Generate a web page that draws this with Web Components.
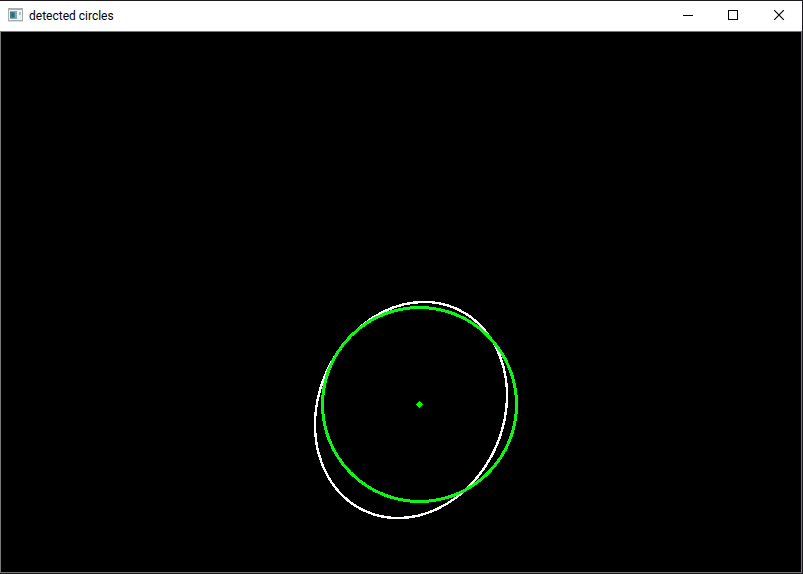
<!DOCTYPE html>
<html lang="en">
<head>
<meta charset="utf-8">
<title>detected circles</title>
<style>
  html, body { height: 100%; margin: 0; background: #1c1a1e; }
  body { font-family: Roboto, "Noto Sans", sans-serif; font-size: 12px; color: #000; }
</style>
</head>
<body>
<app-window>
  <title-bar slot="title">detected circles</title-bar>
  <circle-canvas></circle-canvas>
</app-window>

<script>
class AppWindow extends HTMLElement {
  constructor() {
    super();
    this.attachShadow({ mode: "open" }).innerHTML = `
      <style>
        :host { display: flex; flex-direction: column; box-sizing: border-box; height: 100vh;
                border: solid #1c1a1e; border-width: 1px 1px 1px 0; }
        main { flex: 1; min-height: 0; display: flex; border: 1px solid #787878; background: #000; }
        ::slotted(circle-canvas) { flex: 1; min-width: 0; }
      </style>
      <slot name="title"></slot>
      <main><slot></slot></main>`;
  }
}

class TitleBar extends HTMLElement {
  constructor() {
    super();
    this.attachShadow({ mode: "open" }).innerHTML = `
      <style>
        :host { display: flex; align-items: center; height: 30px; background: #fff; }
        .icon { flex: none; margin: 0 6px 2px 8px; }
        h1 { flex: 1; margin: 0; font: inherit; line-height: 18px; white-space: nowrap; }
        window-button { flex: none; }
      </style>
      <svg class="icon" width="15" height="14" viewBox="0 0 15 14" shape-rendering="crispEdges" aria-hidden="true">
        <rect x="0" y="0" width="15" height="13" fill="#a9adad"/>
        <rect x="1" y="2" width="13" height="10" fill="#eef1f2"/>
        <rect x="2" y="3" width="7" height="8" fill="#7fb0ae"/>
        <rect x="2" y="4" width="5" height="6" fill="#43818b"/>
        <rect x="3" y="5" width="3" height="4" fill="#376c82"/>
        <rect x="11" y="4" width="2" height="3" fill="#b5bfc0"/>
        <rect x="0" y="13" width="15" height="1" fill="#dcdede"/>
      </svg>
      <h1><slot></slot></h1>
      <window-button kind="minimize"></window-button>
      <window-button kind="maximize"></window-button>
      <window-button kind="close"></window-button>`;
  }
}

const GLYPHS = {
  minimize: '<path d="M1 5.5H11" shape-rendering="crispEdges"/>',
  maximize: '<rect x="0.5" y="0.5" width="9" height="9" shape-rendering="crispEdges"/>',
  close: '<path d="M0.2 0.2L9.8 9.8M9.8 0.2L0.2 9.8" stroke-width="1.2"/>'
};

class WindowButton extends HTMLElement {
  connectedCallback() {
    const kind = this.getAttribute("kind");
    this.attachShadow({ mode: "open" }).innerHTML = `
      <style>
        :host { display: block; }
        button { display: flex; align-items: center; justify-content: center;
                 width: 46px; height: 30px; padding: 0 0 2px; border: 0; background: #fff; }
        button:hover { background: #e5e5e5; }
        svg { overflow: visible; }
      </style>
      <button type="button" aria-label="${kind}">
        <svg width="10" height="10" viewBox="0 0 10 10" fill="none" stroke="#000">${GLYPHS[kind]}</svg>
      </button>`;
  }
}

class CircleCanvas extends HTMLElement {
  constructor() {
    super();
    this.attachShadow({ mode: "open" }).innerHTML = `
      <style>
        :host { display: block; background: #000; }
        svg { display: block; width: 100%; height: 100%; }
      </style>
      <svg viewBox="0 0 800 540" fill="none" shape-rendering="crispEdges" role="img" aria-label="White ellipse with a detected green circle">
        <ellipse cx="410" cy="378" rx="111" ry="92.6" transform="rotate(-65.5 410 378)" stroke="#fff" stroke-width="2.4"/>
        <circle cx="418.5" cy="372.5" r="97" stroke="#0cf814" stroke-width="3"/>
        <path d="M418.5 369L422 372.5L418.5 376L415 372.5Z" fill="#00ff00"/>
      </svg>`;
  }
}

customElements.define("window-button", WindowButton);
customElements.define("title-bar", TitleBar);
customElements.define("circle-canvas", CircleCanvas);
customElements.define("app-window", AppWindow);
</script>
</body>
</html>
